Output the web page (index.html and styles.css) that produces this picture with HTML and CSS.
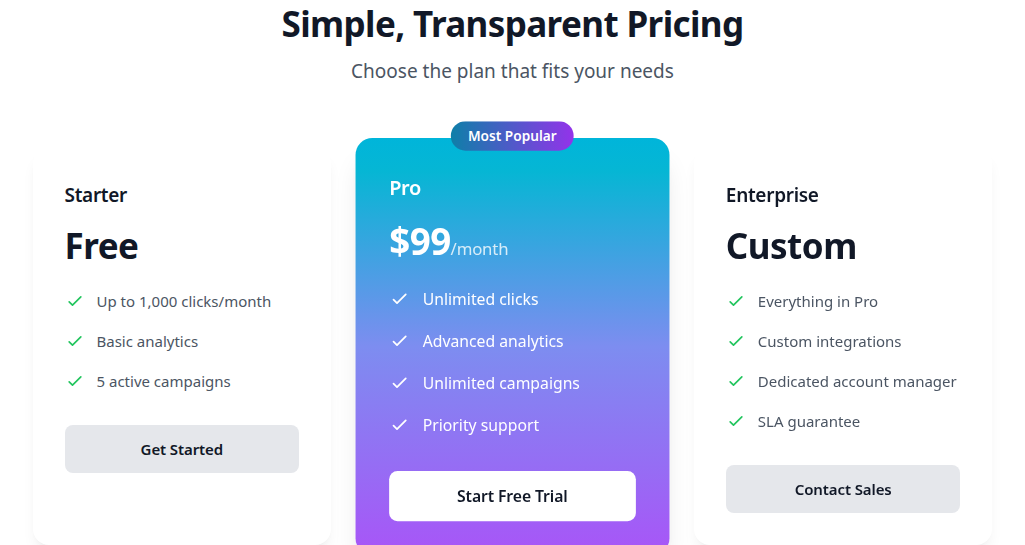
FILE: index.html
```html
<!DOCTYPE html>
<html lang="en">
<head>
<meta charset="utf-8">
<title>Pricing</title>
<link rel="stylesheet" href="styles.css">
</head>
<body>
<section class="pricing">
  <header class="intro">
    <h1 class="title">Simple, Transparent Pricing</h1>
    <p class="subtitle">Choose the plan that fits your needs</p>
  </header>
  <div class="plans">
    <div class="card">
      <h3 class="plan-name">Starter</h3>
      <div class="price">Free</div>
      <ul class="features">
        <li><svg class="check" viewBox="0 0 24 24"><path d="M5 13l4 4L19 7"/></svg>Up to 1,000 clicks/month</li>
        <li><svg class="check" viewBox="0 0 24 24"><path d="M5 13l4 4L19 7"/></svg>Basic analytics</li>
        <li><svg class="check" viewBox="0 0 24 24"><path d="M5 13l4 4L19 7"/></svg>5 active campaigns</li>
      </ul>
      <button class="btn">Get Started</button>
    </div>
    <div class="card card-pro">
      <span class="badge">Most Popular</span>
      <h3 class="plan-name">Pro</h3>
      <div class="price">$99<span class="period">/month</span></div>
      <ul class="features">
        <li><svg class="check" viewBox="0 0 24 24"><path d="M5 13l4 4L19 7"/></svg>Unlimited clicks</li>
        <li><svg class="check" viewBox="0 0 24 24"><path d="M5 13l4 4L19 7"/></svg>Advanced analytics</li>
        <li><svg class="check" viewBox="0 0 24 24"><path d="M5 13l4 4L19 7"/></svg>Unlimited campaigns</li>
        <li><svg class="check" viewBox="0 0 24 24"><path d="M5 13l4 4L19 7"/></svg>Priority support</li>
      </ul>
      <button class="btn btn-light">Start Free Trial</button>
    </div>
    <div class="card">
      <h3 class="plan-name">Enterprise</h3>
      <div class="price">Custom</div>
      <ul class="features">
        <li><svg class="check" viewBox="0 0 24 24"><path d="M5 13l4 4L19 7"/></svg>Everything in Pro</li>
        <li><svg class="check" viewBox="0 0 24 24"><path d="M5 13l4 4L19 7"/></svg>Custom integrations</li>
        <li><svg class="check" viewBox="0 0 24 24"><path d="M5 13l4 4L19 7"/></svg>Dedicated account manager</li>
        <li><svg class="check" viewBox="0 0 24 24"><path d="M5 13l4 4L19 7"/></svg>SLA guarantee</li>
      </ul>
      <button class="btn">Contact Sales</button>
    </div>
  </div>
</section>
</body>
</html>
```
FILE: styles.css
```css
* { box-sizing: border-box; }
html, body { margin: 0; padding: 0; background: #ffffff; }
body {
  font-family: "Noto Sans", "Open Sans", "Liberation Sans", sans-serif;
  color: #111827;
  overflow: hidden;
}
.pricing {
  max-width: 960px;
  margin: 0 auto;
  padding-top: 4px;
}
.intro { text-align: center; }
.title {
  margin: 0;
  font-size: 35px;
  line-height: 40px;
  font-weight: 700;
  color: #111827;
  letter-spacing: -0.6px;
}
.subtitle {
  margin: 13px 0 0;
  font-size: 19px;
  line-height: 28px;
  color: #4b5563;
}
.plans {
  margin-top: 63px;
  display: grid;
  grid-template-columns: repeat(3, 1fr);
  gap: 32px;
}
.card {
  position: relative;
  background: #ffffff;
  border-radius: 16px;
  padding: 33px 32px 32px;
  box-shadow: 0 10px 15px -3px rgba(0,0,0,0.06), 0 4px 6px -4px rgba(0,0,0,0.05);
}
.plan-name {
  margin: 0 0 17px;
  font-size: 19px;
  line-height: 28px;
  font-weight: 600;
  letter-spacing: -0.3px;
}
.price {
  display: flex;
  align-items: baseline;
  height: 40px;
  font-size: 35px;
  line-height: 40px;
  font-weight: 700;
  margin-bottom: 23px;
  letter-spacing: -0.5px;
}
.period {
  font-size: 16px;
  line-height: 24px;
  font-weight: 400;
  opacity: 0.8;
  letter-spacing: -0.2px;
}
.features {
  list-style: none;
  margin: 0 0 32px;
  padding: 0;
  display: flex;
  flex-direction: column;
  gap: 16px;
}
.features li {
  display: flex;
  align-items: center;
  font-size: 15px;
  line-height: 24px;
  color: #4b5563;
}
.check {
  width: 20px;
  height: 20px;
  margin-right: 12px;
  flex: none;
  fill: none;
  stroke: #22c55e;
  stroke-width: 2;
  stroke-linecap: round;
  stroke-linejoin: round;
}
.btn {
  display: block;
  width: 100%;
  height: 48px;
  border: 0;
  border-radius: 8px;
  background: #e5e7eb;
  color: #111827;
  font-family: inherit;
  font-size: 15px;
  font-weight: 600;
  letter-spacing: -0.1px;
}
.card-pro {
  transform: scale(1.05);
  background: linear-gradient(180deg, #00b5da 0%, #06b6d4 8%, #7d8df0 50%, #a855f7 100%);
  color: #ffffff;
  box-shadow: 0 20px 25px -5px rgba(0,0,0,0.1), 0 8px 10px -6px rgba(0,0,0,0.1);
}
.card-pro .features li { color: #ffffff; }
.card-pro .check { stroke: #ffffff; }
.btn-light { background: #ffffff; color: #111827; }
.badge {
  position: absolute;
  top: -16px;
  left: 50%;
  transform: translateX(-50%);
  padding: 4px 16px;
  border-radius: 9999px;
  background: linear-gradient(90deg, #0e7fa8, #9333ea);
  color: #ffffff;
  font-size: 13px;
  line-height: 20px;
  font-weight: 600;
  white-space: nowrap;
}
```
